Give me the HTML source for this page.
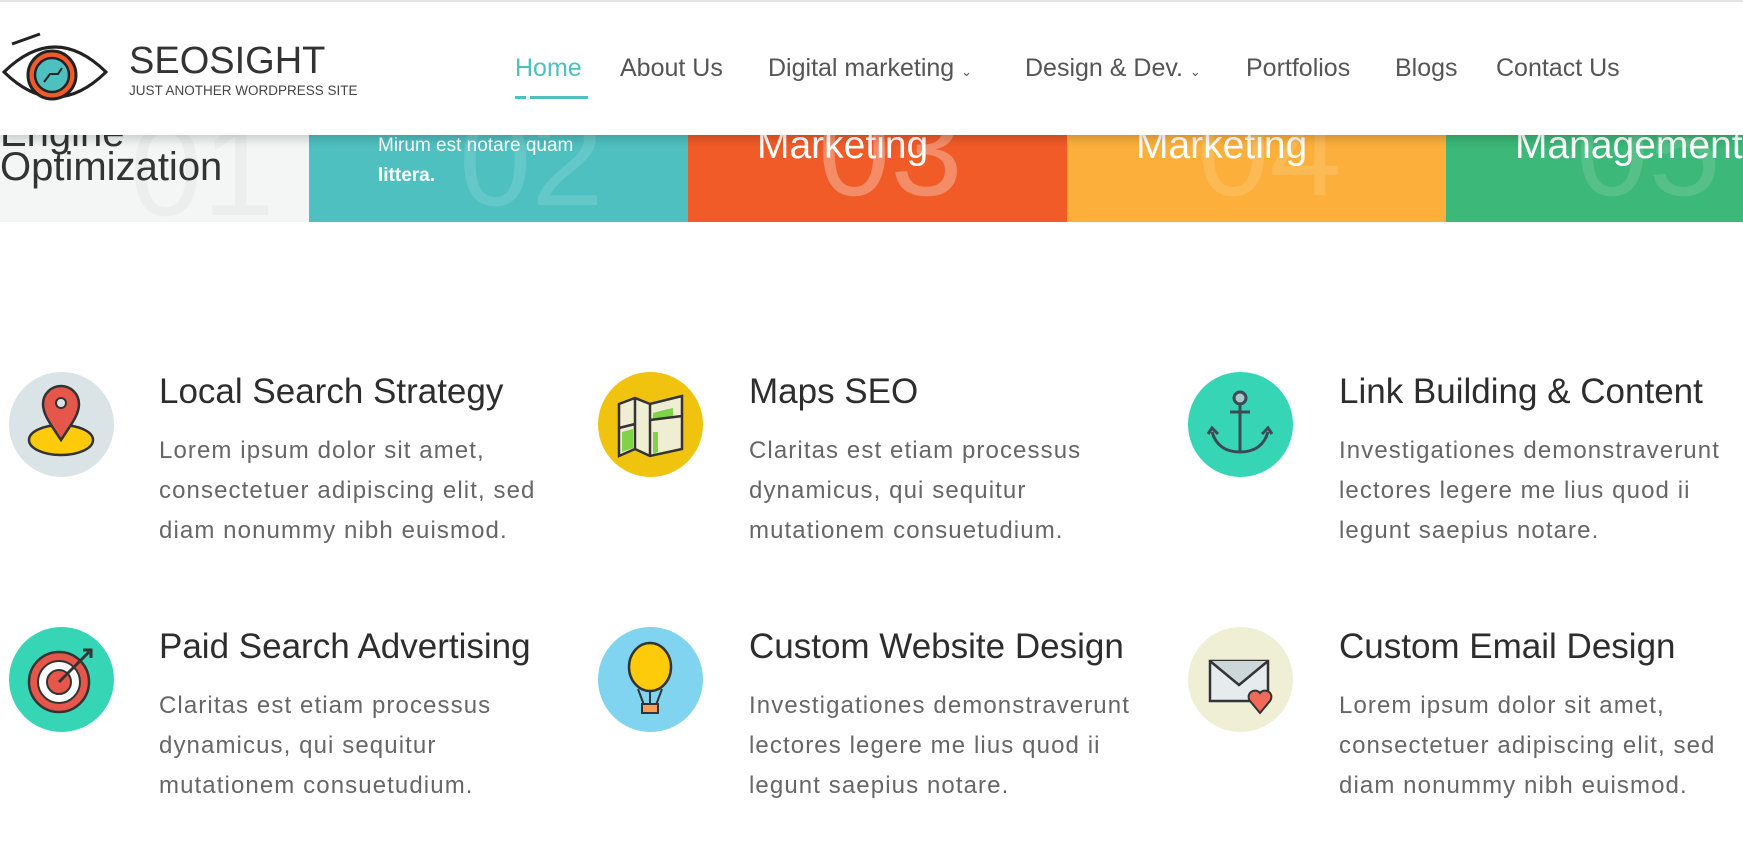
<!DOCTYPE html>
<html><head><meta charset="utf-8"><style>
*{margin:0;padding:0;box-sizing:border-box}
body{width:1743px;height:853px;overflow:hidden;background:#fff;font-family:"Liberation Sans",sans-serif;position:relative}
.hdr{position:absolute;left:0;top:0;width:1743px;height:135px;background:#fff;border-top:2px solid #e3e3e3;z-index:5;box-shadow:0 4px 10px rgba(0,0,0,.18)}
.brand{position:absolute;left:129px;top:38px;font-size:38px;color:#333}
.sub{position:absolute;left:129px;top:81px;font-size:13.5px;color:#444}
.nav{position:absolute;top:52px;font-size:25px;color:#555;white-space:nowrap}
.strip{position:absolute;top:135px;height:87px;overflow:hidden}
.strip .t{position:absolute;color:#fff;white-space:nowrap}
.num{position:absolute;font-size:130px;color:rgba(255,255,255,.13);white-space:nowrap}
.circ{position:absolute;width:105px;height:105px;border-radius:50%}
.ti{position:absolute;font-size:35px;color:#2d2d2d;white-space:nowrap}
.bd{position:absolute;font-size:24px;letter-spacing:1.1px;color:#666;line-height:40px;white-space:nowrap}
</style></head><body>
<div class="hdr">
<svg style="position:absolute;left:0;top:28px" width="110" height="82" viewBox="0 0 110 82">
<path d="M4 42 Q55 -8 106 42 Q55 92 4 42 Z" fill="#fff" stroke="#222" stroke-width="3"/>
<path d="M12 14 L40 4" stroke="#222" stroke-width="3" fill="none"/>
<circle cx="52" cy="45" r="24" fill="#f15b28" stroke="#222" stroke-width="3"/>
<circle cx="52" cy="45" r="17" fill="#4ec0c0" stroke="#222" stroke-width="2.5"/>
<path d="M44 52 L50 44 L58 44 L62 38" stroke="#222" stroke-width="2" fill="none"/>
</svg>
<div class="brand">SEOSIGHT</div>
<div class="sub">JUST ANOTHER WORDPRESS SITE</div>
<div class="nav" style="left:515px;color:#4ec0c0">Home</div>
<div style="position:absolute;left:515px;top:94px;width:11px;height:3px;background:#4ec0c0"></div>
<div style="position:absolute;left:530px;top:94px;width:58px;height:3px;background:#4ec0c0"></div>
<div class="nav" style="left:620px">About Us</div>
<div class="nav" style="left:768px">Digital marketing <span style="font-size:13px">&#8964;</span></div>
<div class="nav" style="left:1025px">Design &amp; Dev. <span style="font-size:13px">&#8964;</span></div>
<div class="nav" style="left:1246px">Portfolios</div>
<div class="nav" style="left:1395px">Blogs</div>
<div class="nav" style="left:1496px">Contact Us</div>
</div>

<div class="strip" style="left:0;width:309px;background:#f4f6f6">
<div class="num" style="left:130px;top:-40px;color:rgba(0,0,0,.03)">01</div>
<div class="t" style="left:0;top:-24px;font-size:40px;color:#333">Engine</div>
<div class="t" style="left:0;top:10px;font-size:40px;color:#333">Optimization</div>
</div>
<div class="strip" style="left:309px;width:379px;background:#4ec0c0">
<div class="num" style="left:150px;top:-50px">02</div>
<div class="t" style="left:69px;top:0px;font-size:19px">Mirum est notare quam</div>
<div class="t" style="left:69px;top:30px;font-size:19px;font-weight:bold">littera.</div>
</div>
<div class="strip" style="left:688px;width:379px;background:#f15b28">
<div class="num" style="left:130px;top:-60px;color:rgba(255,255,255,.3)">03</div>
<div class="t" style="left:69px;top:-11px;font-size:39px">Marketing</div>
</div>
<div class="strip" style="left:1067px;width:379px;background:#fcb03b">
<div class="num" style="left:130px;top:-60px">04</div>
<div class="t" style="left:69px;top:-11px;font-size:39px">Marketing</div>
</div>
<div class="strip" style="left:1446px;width:297px;background:#3cb878">
<div class="num" style="left:130px;top:-60px">05</div>
<div class="t" style="left:69px;top:-11px;font-size:39px">Management</div>
</div>

<div class="circ" style="left:9px;top:372px;background:#dae3e5"></div>
<svg style="position:absolute;left:9px;top:372px" width="105" height="105" viewBox="0 0 105 105">
<ellipse cx="52" cy="68" rx="32" ry="15" fill="#fdcb0a" stroke="#333" stroke-width="2.5"/>
<path d="M52 68 C40 50 34 42 34 32 A18 18 0 0 1 70 32 C70 42 64 50 52 68Z" fill="#e5574a" stroke="#333" stroke-width="2.5"/>
<circle cx="52" cy="31" r="5" fill="#dae3e5" stroke="#333" stroke-width="2"/>
</svg>
<div class="ti" style="left:159px;top:372px">Local Search Strategy</div>
<div class="bd" style="left:159px;top:431px">Lorem ipsum dolor sit amet,<br>consectetuer adipiscing elit, sed<br>diam nonummy nibh euismod.</div>

<div class="circ" style="left:598px;top:372px;background:#f0c30f"></div>
<svg style="position:absolute;left:598px;top:372px" width="105" height="105" viewBox="0 0 105 105">
<path d="M21 32 L37 26 L52 32 L84 24 L84 77 L52 84 L37 77 L21 84 Z" fill="#efeed2" stroke="#333" stroke-width="2.5"/>
<path d="M24 60 L35 57 L35 76 L24 80Z M55 60 L60 60 L60 80 L55 82Z M55 47 L75 44 L75 36 L66 38 L55 41Z" fill="#7ed348"/>
<path d="M21 56 L37 52 M37 26 L37 77 M52 32 L52 84 M52 48 L84 44" stroke="#333" stroke-width="2.5"/>
</svg>
<div class="ti" style="left:749px;top:372px">Maps SEO</div>
<div class="bd" style="left:749px;top:431px">Claritas est etiam processus<br>dynamicus, qui sequitur<br>mutationem consuetudium.</div>

<div class="circ" style="left:1188px;top:372px;background:#36d5b6"></div>
<svg style="position:absolute;left:1188px;top:372px" width="105" height="105" viewBox="0 0 105 105">
<g fill="none" stroke="#3b4a55" stroke-width="3">
<circle cx="52" cy="26" r="6" fill="#a8c8cc"/>
<path d="M52 32 L52 80 M42 40 L62 40 M24 60 Q30 80 52 80 Q74 80 80 60 M20 62 L24 56 L30 62 M74 62 L80 56 L84 62"/>
</g></svg>
<div class="ti" style="left:1339px;top:372px">Link Building &amp; Content</div>
<div class="bd" style="left:1339px;top:431px">Investigationes demonstraverunt<br>lectores legere me lius quod ii<br>legunt saepius notare.</div>

<div class="circ" style="left:9px;top:627px;background:#36d5b6"></div>
<svg style="position:absolute;left:9px;top:627px" width="105" height="105" viewBox="0 0 105 105">
<circle cx="50" cy="55" r="30" fill="#e5574a" stroke="#333" stroke-width="2.5"/>
<circle cx="50" cy="55" r="21" fill="#fff" stroke="#333" stroke-width="2"/>
<circle cx="50" cy="55" r="12" fill="#e5574a" stroke="#333" stroke-width="2"/>
<path d="M50 55 L80 25 M74 23 L82 23 L82 31" stroke="#333" stroke-width="3" fill="none"/>
</svg>
<div class="ti" style="left:159px;top:627px">Paid Search Advertising</div>
<div class="bd" style="left:159px;top:686px">Claritas est etiam processus<br>dynamicus, qui sequitur<br>mutationem consuetudium.</div>

<div class="circ" style="left:598px;top:627px;background:#80d4f0"></div>
<svg style="position:absolute;left:598px;top:627px" width="105" height="105" viewBox="0 0 105 105">
<ellipse cx="52" cy="40" rx="21" ry="24" fill="#fdcb0a" stroke="#333" stroke-width="2.5"/>
<path d="M40 62 L46 78 M64 62 L58 78 M52 64 L52 78" stroke="#333" stroke-width="2"/>
<rect x="44" y="77" width="16" height="9" fill="#f5a05a" stroke="#333" stroke-width="2"/>
</svg>
<div class="ti" style="left:749px;top:627px">Custom Website Design</div>
<div class="bd" style="left:749px;top:686px">Investigationes demonstraverunt<br>lectores legere me lius quod ii<br>legunt saepius notare.</div>

<div class="circ" style="left:1188px;top:627px;background:#efefd6"></div>
<svg style="position:absolute;left:1188px;top:627px" width="105" height="105" viewBox="0 0 105 105">
<rect x="22" y="34" width="58" height="40" fill="#e6ecee" stroke="#333" stroke-width="2.5"/>
<path d="M22 34 L51 58 L80 34" fill="#cdd6d8" stroke="#333" stroke-width="2.5"/>
<path d="M72 86 L62 74 A6 6 0 0 1 72 66 A6 6 0 0 1 82 74 Z" fill="#f06a5a" stroke="#333" stroke-width="2"/>
</svg>
<div class="ti" style="left:1339px;top:627px">Custom Email Design</div>
<div class="bd" style="left:1339px;top:686px">Lorem ipsum dolor sit amet,<br>consectetuer adipiscing elit, sed<br>diam nonummy nibh euismod.</div>
</body></html>
